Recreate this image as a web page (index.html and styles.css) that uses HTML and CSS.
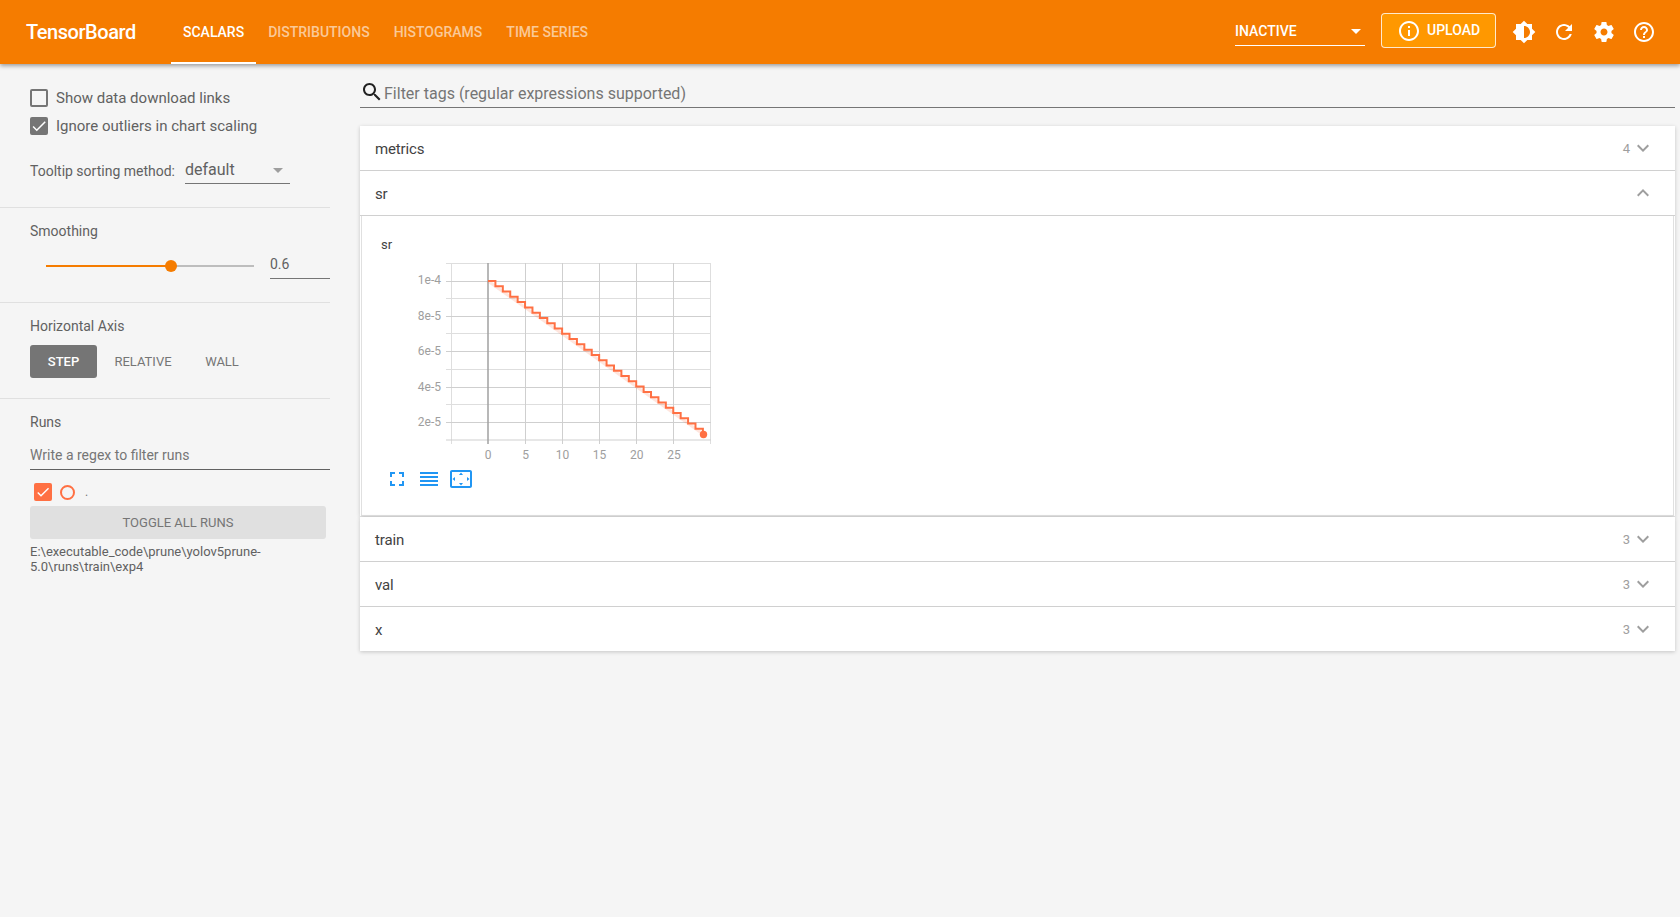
FILE: index.html
```html
<!DOCTYPE html>
<html lang="en">
<head>
<meta charset="utf-8">
<title>TensorBoard</title>
<link rel="stylesheet" href="styles.css">
</head>
<body>
<header class="topbar">
  <div class="logo">TensorBoard</div>
  <nav class="tabs">
    <a class="tab active">SCALARS</a>
    <a class="tab">DISTRIBUTIONS</a>
    <a class="tab">HISTOGRAMS</a>
    <a class="tab">TIME SERIES</a>
  </nav>
  <div class="spacer"></div>
  <div class="plugin-select"><span>INACTIVE</span><i class="caret-white"></i></div>
  <button class="upload">
    <svg class="ic24" viewBox="0 0 24 24"><path fill="#fff" d="M11 17h2v-6h-2v6zm1-15C6.48 2 2 6.48 2 12s4.48 10 10 10 10-4.48 10-10S17.52 2 12 2zm0 18c-4.41 0-8-3.59-8-8s3.59-8 8-8 8 3.59 8 8-3.59 8-8 8zM11 9h2V7h-2v2z"/></svg>
    <span class="upload-label">UPLOAD</span>
  </button>
  <div class="icon-btn"><svg class="ic24" viewBox="0 0 24 24"><path fill="#fff" d="M20 15.31L23.31 12 20 8.69V4h-4.69L12 .69 8.69 4H4v4.69L.69 12 4 15.31V20h4.69L12 23.31 15.31 20H20v-4.69zM12 18V6c3.31 0 6 2.69 6 6s-2.69 6-6 6z"/></svg></div>
  <div class="icon-btn"><svg class="ic24" viewBox="0 0 24 24"><path fill="#fff" d="M17.65 6.35C16.2 4.9 14.21 4 12 4c-4.42 0-7.99 3.58-7.99 8s3.57 8 7.99 8c3.73 0 6.84-2.55 7.73-6h-2.08c-.82 2.33-3.04 4-5.65 4-3.31 0-6-2.69-6-6s2.69-6 6-6c1.66 0 3.14.69 4.22 1.78L13 11h7V4l-2.35 2.35z"/></svg></div>
  <div class="icon-btn"><svg class="ic24" viewBox="0 0 24 24"><path fill="#fff" d="M19.43 12.98c.04-.32.07-.64.07-.98s-.03-.66-.07-.98l2.11-1.65c.19-.15.24-.42.12-.64l-2-3.46c-.12-.22-.39-.3-.61-.22l-2.49 1c-.52-.4-1.08-.73-1.69-.98l-.38-2.65C14.46 2.18 14.25 2 14 2h-4c-.25 0-.46.18-.49.42l-.38 2.65c-.61.25-1.17.59-1.69.98l-2.49-1c-.23-.09-.49 0-.61.22l-2 3.46c-.13.22-.07.49.12.64l2.11 1.65c-.04.32-.07.65-.07.98s.03.66.07.98l-2.11 1.65c-.19.15-.24.42-.12.64l2 3.46c.12.22.39.3.61.22l2.49-1c.52.4 1.08.73 1.69.98l.38 2.65c.03.24.24.42.49.42h4c.25 0 .46-.18.49-.42l.38-2.65c.61-.25 1.17-.59 1.69-.98l2.49 1c.23.09.49 0 .61-.22l2-3.46c.12-.22.07-.49-.12-.64l-2.11-1.65zM12 15.5c-1.93 0-3.5-1.57-3.5-3.5s1.57-3.5 3.5-3.5 3.5 1.57 3.5 3.5-1.57 3.5-3.5 3.5z"/></svg></div>
  <div class="icon-btn"><svg class="ic24" viewBox="0 0 24 24"><path fill="#fff" d="M11 18h2v-2h-2v2zm1-16C6.48 2 2 6.48 2 12s4.48 10 10 10 10-4.48 10-10S17.52 2 12 2zm0 18c-4.41 0-8-3.59-8-8s3.59-8 8-8 8 3.59 8 8-3.59 8-8 8zm0-14c-2.21 0-4 1.79-4 4h2c0-1.1.9-2 2-2s2 .9 2 2c0 2-3 1.75-3 5h2c0-2.25 3-2.5 3-5 0-2.21-1.79-4-4-4z"/></svg></div>
</header>

<div class="page">
  <aside class="sidebar">
    <section class="side-sec sec-options">
      <label class="check-row"><span class="box"></span>Show data download links</label>
      <label class="check-row"><span class="box on"><svg viewBox="0 0 24 24"><path fill="#fff" d="M9 16.17L4.83 12l-1.42 1.41L9 19 21 7l-1.41-1.41z"/></svg></span>Ignore outliers in chart scaling</label>
      <div class="tooltip-row">
        <span class="tooltip-label">Tooltip sorting method:</span>
        <div class="dd"><span>default</span><i class="caret-grey"></i></div>
      </div>
    </section>
    <section class="side-sec sec-smooth">
      <div class="sec-title">Smoothing</div>
      <div class="slider-row">
        <div class="slider"><div class="fill"></div><div class="thumb"></div></div>
        <div class="num">0.6</div>
      </div>
    </section>
    <section class="side-sec sec-axis">
      <div class="sec-title">Horizontal Axis</div>
      <div class="axis-btns">
        <span class="ax sel">STEP</span>
        <span class="ax rel">RELATIVE</span>
        <span class="ax wall">WALL</span>
      </div>
    </section>
    <section class="side-sec sec-runs">
      <div class="sec-title">Runs</div>
      <div class="run-filter">Write a regex to filter runs</div>
      <div class="run-row">
        <span class="run-box"><svg viewBox="0 0 24 24"><path fill="#fff" d="M9 16.17L4.83 12l-1.42 1.41L9 19 21 7l-1.41-1.41z"/></svg></span>
        <span class="run-dot"></span>
        <span class="run-name">.</span>
      </div>
      <div class="toggle">TOGGLE ALL RUNS</div>
      <div class="run-path">E:\executable_code\prune\yolov5prune-<br>5.0\runs\train\exp4</div>
    </section>
  </aside>

  <main class="main">
    <div class="tagfilter">
      <svg class="ic24" viewBox="0 0 24 24"><path fill="#212121" d="M15.5 14h-.79l-.28-.27C15.41 12.59 16 11.11 16 9.5 16 5.91 13.09 3 9.5 3S3 5.91 3 9.5 5.91 16 9.5 16c1.61 0 3.09-.59 4.23-1.57l.27.28v.79l5 4.99L20.49 19l-4.99-5zm-6 0C7.01 14 5 11.99 5 9.5S7.01 5 9.5 5 14 7.01 14 9.5 11.99 14 9.5 14z"/></svg>
      <span>Filter tags (regular expressions supported)</span>
    </div>

    <div class="cat">
      <div class="cat-head"><span class="cat-name">metrics</span><span class="cat-count">4</span><svg class="ic24" viewBox="0 0 24 24"><path fill="#9e9e9e" d="M16.59 8.59L12 13.17 7.41 8.59 6 10l6 6 6-6z"/></svg></div>
      <div class="cat-head"><span class="cat-name">sr</span><span class="cat-count"></span><svg class="ic24" viewBox="0 0 24 24"><path fill="#9e9e9e" d="M12 8l-6 6 1.41 1.41L12 10.83l4.59 4.58L18 14z"/></svg></div>
      <div class="cat-body">
        <div class="chart-title">sr</div>
        <svg class="chart" viewBox="0 0 320 206" width="320" height="206">
          <g class="minor">
            <line x1="46" y1="3.5" x2="311" y2="3.5"/>
            <line x1="46" y1="38.5" x2="311" y2="38.5"/>
            <line x1="46" y1="73.5" x2="311" y2="73.5"/>
            <line x1="46" y1="109.5" x2="311" y2="109.5"/>
            <line x1="46" y1="144.5" x2="311" y2="144.5"/>
            <line x1="51.5" y1="3" x2="51.5" y2="184"/>
            <line x1="310.5" y1="3" x2="310.5" y2="184"/>
          </g>
          <g class="major">
            <line x1="46" y1="21.5" x2="311" y2="21.5"/>
            <line x1="46" y1="56.5" x2="311" y2="56.5"/>
            <line x1="46" y1="91.5" x2="311" y2="91.5"/>
            <line x1="46" y1="127.5" x2="311" y2="127.5"/>
            <line x1="46" y1="162.5" x2="311" y2="162.5"/>
            <line x1="46" y1="180" x2="311" y2="180"/>
            <line x1="125.5" y1="3" x2="125.5" y2="184"/>
            <line x1="162.5" y1="3" x2="162.5" y2="184"/>
            <line x1="199.5" y1="3" x2="199.5" y2="184"/>
            <line x1="236.5" y1="3" x2="236.5" y2="184"/>
            <line x1="273.5" y1="3" x2="273.5" y2="184"/>
          </g>
          <line class="zero" x1="88" y1="3" x2="88" y2="184"/>
          <g class="ylab">
            <text x="41" y="24">1e-4</text>
            <text x="41" y="60">8e-5</text>
            <text x="41" y="95">6e-5</text>
            <text x="41" y="131">4e-5</text>
            <text x="41" y="166">2e-5</text>
          </g>
          <g class="xlab">
            <text x="88" y="199">0</text>
            <text x="125.5" y="199">5</text>
            <text x="162.5" y="199">10</text>
            <text x="199.5" y="199">15</text>
            <text x="236.7" y="199">20</text>
            <text x="274" y="199">25</text>
          </g>
          <line class="halo" x1="88" y1="21" x2="303" y2="174"/>
          <path class="series" d="M88 21h7.41v5.28h7.41v5.28h7.41v5.28h7.41v5.28h7.41v5.28h7.41v5.28h7.41v5.28h7.41v5.28h7.41v5.28h7.41v5.28h7.41v5.28h7.41v5.28h7.41v5.28h7.41v5.28h7.41v5.28h7.41v5.28h7.41v5.28h7.41v5.28h7.41v5.28h7.41v5.28h7.41v5.28h7.41v5.28h7.41v5.28h7.41v5.28h7.41v5.28h7.41v5.28h7.41v5.28h7.41v5.28h7.41v5.28"/>
          <circle class="dot" cx="303.5" cy="174.5" r="3.7"/>
        </svg>
        <div class="chart-tools">
          <svg class="ic24" viewBox="0 0 24 24"><path fill="#2196f3" d="M7 14H5v5h5v-2H7v-3zm-2-4h2V7h3V5H5v5zm12 7h-3v2h5v-5h-2v3zM14 5v2h3v3h2V5h-5z"/></svg>
          <svg class="ic24" viewBox="0 0 24 24"><path fill="#2196f3" d="M3 15h18v-2H3v2zm0 4h18v-2H3v2zm0-8h18V9H3v2zm0-6v2h18V5H3z"/></svg>
          <svg class="ic24" viewBox="0 0 24 24"><path fill="#2196f3" d="M12.01 5.5L10 8h4l-1.99-2.5zM18 10v4l2.5-1.99L18 10zM6 10l-2.5 2.01L6 14v-4zm8 6h-4l2.01 2.5L14 16zm7-13H3c-1.1 0-2 .9-2 2v14c0 1.1.9 2 2 2h18c1.1 0 2-.9 2-2V5c0-1.1-.9-2-2-2zm0 16.01H3V4.99h18v14.02z"/></svg>
        </div>
      </div>
    </div>

    <div class="cat cat-rest">
      <div class="cat-head"><span class="cat-name">train</span><span class="cat-count">3</span><svg class="ic24" viewBox="0 0 24 24"><path fill="#9e9e9e" d="M16.59 8.59L12 13.17 7.41 8.59 6 10l6 6 6-6z"/></svg></div>
      <div class="cat-head"><span class="cat-name">val</span><span class="cat-count">3</span><svg class="ic24" viewBox="0 0 24 24"><path fill="#9e9e9e" d="M16.59 8.59L12 13.17 7.41 8.59 6 10l6 6 6-6z"/></svg></div>
      <div class="cat-head last"><span class="cat-name">x</span><span class="cat-count">3</span><svg class="ic24" viewBox="0 0 24 24"><path fill="#9e9e9e" d="M16.59 8.59L12 13.17 7.41 8.59 6 10l6 6 6-6z"/></svg></div>
    </div>
  </main>
</div>
</body>
</html>
```

FILE: styles.css
```css
* { box-sizing: border-box; }
html, body { margin: 0; height: 100%; }
body {
  background: #f5f5f5;
  font-family: Roboto, "Noto Sans", sans-serif;
  font-size: 14px;
  color: #616161;
  overflow: hidden;
}
.ic24 { width: 24px; height: 24px; display: block; flex: none; }

/* top bar */
.topbar {
  height: 64px;
  background: #f57c00;
  display: flex;
  align-items: center;
  padding-right: 16px;
  box-shadow: 0 2px 4px rgba(0, 0, 0, .35);
  position: relative;
  color: #fff;
}
.logo { font-size: 20px; font-weight: 500; width: 171px; padding-left: 26px; letter-spacing: -.45px; }
.tabs { display: flex; height: 64px; }
.tab {
  display: flex;
  align-items: center;
  padding: 1px 12px 0;
  font-size: 14px;
  font-weight: 500;
  color: rgba(255, 255, 255, .6);
  border-bottom: 2px solid transparent;
}
.tab.active { color: #fff; border-bottom-color: #fff; }
.spacer { flex: 1; }
.plugin-select {
  width: 130px;
  height: 32px;
  margin-top: -4px;
  padding: 3px 4px 0 0;
  display: flex;
  align-items: center;
  justify-content: space-between;
  border-bottom: 1px solid #fff;
  font-size: 14px;
  font-weight: 500;
}
.caret-white { width: 0; height: 0; border: 5px solid transparent; border-top-color: #fff; border-bottom: 0; }
.upload {
  margin: -3px 8px 0 16px;
  width: 115px;
  height: 35px;
  background: #ff9800;
  border: 1px solid rgba(255, 255, 255, .8);
  border-radius: 4px;
  color: #fff;
  font: 500 14px Roboto, sans-serif;
  display: flex;
  align-items: center;
  gap: 6px;
  padding: 0 0 0 15px;
}
.upload-label { padding-bottom: 2px; }
.icon-btn { width: 40px; height: 40px; display: flex; align-items: center; justify-content: center; }

/* layout */
.page { display: flex; gap: 30px; }
.sidebar { width: 330px; flex: none; }
.main { width: 1315px; flex: none; }

/* sidebar */
.side-sec { padding-left: 30px; border-bottom: 1px solid #e0e0e0; padding-top: 13px; }
.sec-title { line-height: 20px; font-size: 14px; color: #616161; }
.sec-options { padding-top: 20px; padding-bottom: 23px; height: 144px; }
.check-row { display: flex; align-items: center; height: 28px; gap: 8px; font-size: 15px; color: #616161; }
.box { width: 18px; height: 18px; border: 2px solid #757575; border-radius: 2px; display: block; flex: none; }
.box.on { background: #757575; }
.box svg, .run-box svg { display: block; width: 100%; height: 100%; }
.box.on svg { margin: -2px; width: 18px; height: 18px; }
.tooltip-row { display: flex; align-items: flex-start; margin-top: 18px; height: 26px; }
.tooltip-label { font-size: 14px; line-height: 26px; width: 155px; flex: none; color: #616161; }
.dd {
  width: 105px;
  height: 26px;
  border-bottom: 1px solid #757575;
  display: flex;
  align-items: center;
  justify-content: space-between;
  font-size: 16px;
  line-height: 22px;
  color: #616161;
  padding: 0 7px 2px 0;
}
.caret-grey { width: 0; height: 0; border: 5px solid transparent; border-top-color: #9e9e9e; border-bottom: 0; margin-top: 2px; }

.sec-smooth { height: 95px; }
.slider-row { display: flex; align-items: center; margin-top: 13px; height: 25px; }
.slider { width: 208px; height: 2px; background: #bdbdbd; margin-left: 16px; position: relative; margin-top: -2px; flex: none; }
.fill { width: 125px; height: 2px; background: #f57c00; }
.thumb { position: absolute; left: 119px; top: -5px; width: 12px; height: 12px; border-radius: 50%; background: #f57c00; }
.num { margin-left: 16px; width: 60px; height: 25px; border-bottom: 1px solid #757575; line-height: 20px; font-size: 14px; }

.sec-axis { height: 96px; }
.axis-btns { display: flex; margin-top: 9px; height: 33px; }
.ax { font-size: 13px; line-height: 33px; color: #757575; text-align: center; }
.ax.sel { width: 67px; background: #757575; color: #fff; border-radius: 3px; font-weight: 500; }
.ax.rel { width: 92px; }
.ax.wall { width: 34px; margin-left: 16px; white-space: nowrap; }

.sec-runs { border-bottom: 0; }
.run-filter { margin-top: 10px; height: 28px; border-bottom: 1px solid #616161; line-height: 26px; font-size: 14px; color: #757575; }
.run-row { display: flex; align-items: center; height: 18px; margin: 13px 0 0 4px; }
.run-box { width: 18px; height: 18px; background: #ff7043; border-radius: 2px; flex: none; padding: 1px; }
.run-dot { width: 15px; height: 15px; border: 2px solid #ff7043; border-radius: 50%; margin-left: 8px; flex: none; }
.run-name { margin-left: 10px; font-size: 12px; color: #757575; }
.toggle { width: 296px; height: 33px; margin-top: 5px; background: #e0e0e0; border-radius: 3px; text-align: center; line-height: 33px; font-size: 13px; color: #757575; }
.run-path { margin-top: 5px; font-size: 13px; line-height: 15px; color: #616161; }

/* main */
.tagfilter {
  margin-top: 12px;
  height: 32px;
  border-bottom: 1px solid #757575;
  display: flex;
  align-items: center;
  font-size: 16px;
  color: #757575;
}
.tagfilter span { padding-top: 3px; }
.cat { margin-top: 18px; background: #fff; box-shadow: 0 1px 4px rgba(0, 0, 0, .2); }
.cat-rest { margin-top: 1px; }
.cat-head {
  height: 45px;
  padding: 0 20px 0 15px;
  display: flex;
  align-items: center;
  border-bottom: 1px solid #d0d0d0;
  background: #fff;
}
.cat-head.last { height: 44px; border-bottom: 0; }
.cat-name { flex: 1; font-size: 15px; letter-spacing: -.15px; color: #424242; margin-top: 2px; }
.cat-count { font-size: 13px; color: #9e9e9e; margin-right: 1px; }
.cat-head .ic24 { margin-top: -1px; }
.cat-body {
  height: 300px;
  margin: 0 1px;
  border: 1px solid #e0e0e0;
  border-top: 0;
  padding: 20px 0 0 19px;
}
.chart-title { font-size: 13px; line-height: 18px; color: #424242; }
.chart { display: block; margin: 6px 0 0 19px; }
.chart .minor line { stroke: #dedede; stroke-width: 1; }
.chart .major line { stroke: #cfcfcf; stroke-width: 1; }
.chart .zero { stroke: #a0a0a0; stroke-width: 1.5; }
.chart text { font: 12px Roboto, sans-serif; fill: #9e9e9e; }
.chart .ylab text { text-anchor: end; }
.chart .xlab text { text-anchor: middle; }
.halo { stroke: #ff7043; stroke-opacity: .18; stroke-width: 3; }
.series { fill: none; stroke: #ff7043; stroke-width: 2; }
.dot { fill: #ff7043; }
.chart-tools { display: flex; gap: 8px; margin: 1px 0 0 4px; }
```
